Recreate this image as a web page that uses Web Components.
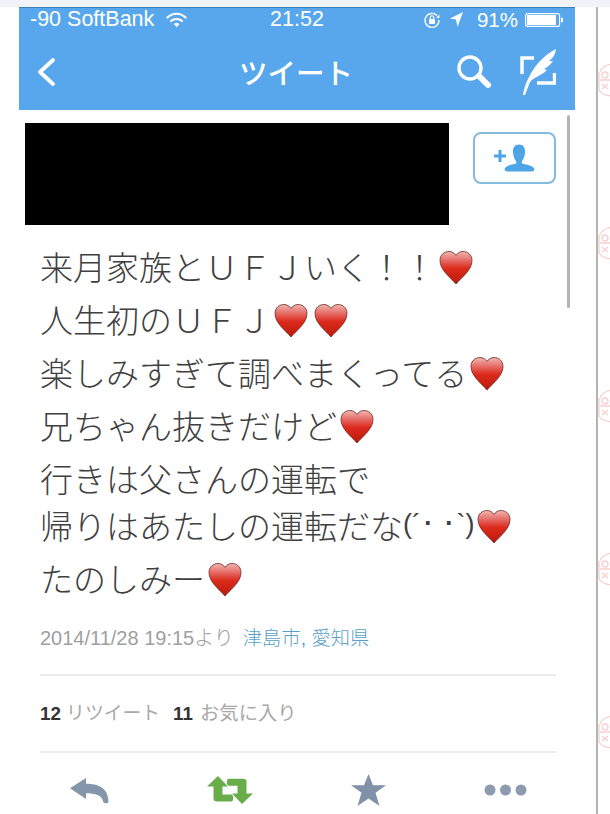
<!DOCTYPE html>
<html lang="ja">
<head>
<meta charset="utf-8">
<title>ツイート</title>
<style>
  html, body { margin: 0; height: 814px; overflow: hidden; background: #fff; }
  body { font-family: "Liberation Sans", "Noto Sans CJK JP", sans-serif; }
</style>
</head>
<body>
<screenshot-page>
  <phone-screen>
    <status-bar></status-bar>
    <nav-bar title-text="ツイート"></nav-bar>
    <tweet-header></tweet-header>
    <tweet-body>
      <tweet-line>来月家族とＵＦＪいく！！<heart-icon></heart-icon></tweet-line>
      <tweet-line>人生初のＵＦＪ<heart-icon></heart-icon><heart-icon></heart-icon></tweet-line>
      <tweet-line>楽しみすぎて調べまくってる<heart-icon></heart-icon></tweet-line>
      <tweet-line>兄ちゃん抜きだけど<heart-icon></heart-icon></tweet-line>
      <tweet-line>行きは父さんの運転で</tweet-line>
      <tweet-line tight>帰りはあたしの運転だな<small-face>(´･&nbsp;･`)</small-face><heart-icon></heart-icon></tweet-line>
      <tweet-line>たのしみー<heart-icon></heart-icon></tweet-line>
    </tweet-body>
    <tweet-meta></tweet-meta>
    <tweet-counts></tweet-counts>
    <action-bar></action-bar>
  </phone-screen>
</screenshot-page>

<script>
class ScreenshotPage extends HTMLElement {
  constructor() {
    super();
    this.attachShadow({ mode: 'open' });
    const stamps = Array(5).fill('<page-stamp></page-stamp>').join('');
    this.shadowRoot.innerHTML = `
      <style>
        :host { display: block; width: 610px; height: 814px; overflow: hidden; }
        .strip { height: 7px; background: #f0f3f8; }
        .row { display: flex; height: 807px; }
        .gutter { width: 19px; flex: none; }
        .mid { width: 21px; flex: none; }
        .margin {
          flex: 1;
          border-left: 2px solid #b4b4b4;
          padding-top: 55px;
          display: flex;
          flex-direction: column;
          gap: 127px;
        }
      </style>
      <div class="strip"></div>
      <div class="row">
        <div class="gutter"></div>
        <slot></slot>
        <div class="mid"></div>
        <div class="margin">${stamps}</div>
      </div>
    `;
  }
}

class PageStamp extends HTMLElement {
  constructor() {
    super();
    this.attachShadow({ mode: 'open' });
    this.shadowRoot.innerHTML = `
      <style>
        :host { display: block; width: 12px; height: 36px; overflow: hidden; }
        svg { filter: blur(0.5px); }
      </style>
      <svg width="24" height="36" viewBox="0 0 24 36" fill="none" stroke="#f6d0d0" stroke-width="1.3">
        <path d="M2 10 C4 4 12 1 20 3 M1 10 V28 C4 33 12 35 20 33"/>
        <circle cx="7" cy="13" r="3"/>
        <path d="M2 18 L12 18 M4 22 L10 27 M10 22 L4 27"/>
      </svg>
    `;
  }
}

class PhoneScreen extends HTMLElement {
  constructor() {
    super();
    this.attachShadow({ mode: 'open' });
    this.shadowRoot.innerHTML = `
      <style>
        :host { display: block; position: relative; width: 556px; flex: none; height: 807px; overflow: hidden; background: #fff; }
        .scroll {
          position: absolute;
          left: 548px;
          top: 108px;
          width: 3px;
          height: 193px;
          border-radius: 2px;
          background: #b3b3b3;
        }
      </style>
      <slot></slot>
      <div class="scroll"></div>
    `;
  }
}

class StatusBar extends HTMLElement {
  constructor() {
    super();
    this.attachShadow({ mode: 'open' });
    this.shadowRoot.innerHTML = `
      <style>
        :host {
          display: grid;
          grid-template-columns: 1fr auto 1fr;
          align-items: center;
          height: 23px;
          padding: 0 11px;
          background: #58a7ec;
          box-shadow: inset 0 1px 0 #3d7fb5;
          color: #fff;
          font: 21.5px "Liberation Sans", sans-serif;
        }
        .left, .right { display: flex; align-items: center; }
        .right { justify-content: flex-end; }
        svg { display: block; }
        .wifi { margin-left: 12px; }
        .pct { margin: 0 7px 0 14px; font-size: 20.5px; }
        .arrow { margin-left: 10px; }
      </style>
      <div class="left">
        <span>-90 SoftBank</span>
        <svg class="wifi" width="21" height="16" viewBox="0 0 21 16" fill="none" stroke="#fff" stroke-width="2.2" stroke-linecap="round">
          <path d="M1.5 5.5 C7 0.5 14 0.5 19.5 5.5"/>
          <path d="M5 9 C8 6.3 13 6.3 16 9"/>
          <path d="M10.5 14.5 L8.3 12 C9.6 11 11.4 11 12.7 12 Z" fill="#fff" stroke-width="1"/>
        </svg>
      </div>
      <span>21:52</span>
      <div class="right">
        <svg width="16" height="16" viewBox="0 0 16 16" fill="none" stroke="#fff" stroke-width="1.4">
          <path d="M13 3.5 A7 7 0 1 0 15 8"/>
          <path d="M15.4 2.5 V6 H12" fill="#fff" stroke="none"/>
          <rect x="5" y="7" width="6" height="5" rx="1" fill="#fff" stroke="none"/>
          <path d="M6.3 7 V5.5 A1.7 1.7 0 0 1 9.7 5.5 V7" stroke-width="1.1"/>
        </svg>
        <svg class="arrow" width="13" height="15" viewBox="0 0 13 15" fill="#fff"><path d="M13 0 L0 6.5 L6 7.5 L7.5 15 Z"/></svg>
        <span class="pct">91%</span>
        <svg width="39" height="14" viewBox="0 0 39 14">
          <rect x="0.6" y="0.6" width="34" height="12.8" rx="2" fill="none" stroke="#fff" stroke-width="1.1"/>
          <rect x="2" y="2" width="29" height="10" fill="#fff"/>
          <rect x="36" y="4.5" width="2" height="5" rx="1" fill="#fff"/>
        </svg>
      </div>
    `;
  }
}

class NavBar extends HTMLElement {
  constructor() {
    super();
    this.attachShadow({ mode: 'open' });
    this.shadowRoot.innerHTML = `
      <style>
        :host {
          display: grid;
          grid-template-columns: 1fr auto 1fr;
          align-items: center;
          height: 80px;
          padding: 3px 19px 0 17px;
          box-sizing: border-box;
          background: #58a7ec;
          color: #fff;
        }
        h1 {
          margin: 0;
          font: 500 28.5px "Noto Sans CJK JP", sans-serif;
        }
        .right { display: flex; justify-content: flex-end; align-items: center; gap: 28px; }
        svg { display: block; }
      </style>
      <svg width="20" height="30" viewBox="0 0 20 30" fill="none" stroke="#fff" stroke-width="3.8" stroke-linecap="round" stroke-linejoin="round">
        <path d="M17 3 L4 15 L17 27"/>
      </svg>
      <h1></h1>
      <div class="right">
        <svg width="36" height="34" viewBox="0 0 36 34" fill="none" stroke="#fff">
          <circle cx="14" cy="13" r="11" stroke-width="3.4"/>
          <path d="M23 21 L32 30" stroke-width="6" stroke-linecap="round"/>
        </svg>
        <svg width="36" height="46" viewBox="0 0 36 46" fill="none" stroke="#fff" stroke-width="3.4">
          <path d="M14 9 H2 V25"/>
          <path d="M34.5 24 V34 H17"/>
          <path d="M3 46 C5 32 16 10 36 0 C35 6 33 9 29 12 L33 12 C30 16 28 18 24 20 L27 21 C21 27 14 28 10 33 L5 46 Z" fill="#fff" stroke="none"/>
        </svg>
      </div>
    `;
    this.shadowRoot.querySelector('h1').textContent = this.getAttribute('title-text');
  }
}

class TweetHeader extends HTMLElement {
  constructor() {
    super();
    this.attachShadow({ mode: 'open' });
    this.shadowRoot.innerHTML = `
      <style>
        :host { display: flex; justify-content: space-between; align-items: flex-start; padding: 13px 19px 0 6px; height: 102px; }
        .mask { width: 424px; height: 102px; background: #000; }
        button {
          display: flex;
          align-items: center;
          justify-content: center;
          width: 83px;
          height: 52px;
          margin-top: 9px;
          padding: 0;
          box-sizing: border-box;
          border: 2px solid #86bbdd;
          border-radius: 8px;
          background: #fdfeff;
        }
        svg { display: block; }
      </style>
      <div class="mask"></div>
      <button aria-label="follow">
        <svg width="42" height="28" viewBox="0 0 42 28" fill="#4ea5e6">
          <path d="M0 10.5 H4.5 V6 H7.5 V10.5 H12 V13.5 H7.5 V18 H4.5 V13.5 H0 Z"/>
          <path d="M25 0.5 C29.5 0.5 31.5 4 31 9 C30.6 13 29 16 27.8 17.5 V19.5 C31 20.5 36 20.5 40 24 C41 25.5 40 27.5 38 27.5 H13 C11 27.5 10 25.5 11 24 C14 20.5 19 20.5 22.2 19.5 V17.5 C21 16 19.4 13 19 9 C18.5 4 20.5 0.5 25 0.5 Z"/>
        </svg>
      </button>
    `;
  }
}

class TweetBody extends HTMLElement {
  constructor() {
    super();
    this.attachShadow({ mode: 'open' });
    this.shadowRoot.innerHTML = `
      <style>
        :host { display: block; padding: 14px 0 0 21px; color: #404040; font: 300 33px "Noto Sans CJK JP", sans-serif; }
      </style>
      <slot></slot>
    `;
  }
}

class TweetLine extends HTMLElement {
  constructor() {
    super();
    this.attachShadow({ mode: 'open' });
    this.shadowRoot.innerHTML = `
      <style>
        :host { display: flex; align-items: center; height: 53px; white-space: nowrap; }
        :host([tight]) { height: 41px; margin-bottom: 6px; }
      </style>
      <slot></slot>
    `;
  }
}

class SmallFace extends HTMLElement {
  constructor() {
    super();
    this.attachShadow({ mode: 'open' });
    this.shadowRoot.innerHTML = `
      <style>:host { display: inline-block; font: 27px "Liberation Sans", sans-serif; }</style>
      <slot></slot>
    `;
  }
}

class HeartIcon extends HTMLElement {
  static count = 0;
  constructor() {
    super();
    this.attachShadow({ mode: 'open' });
    const id = 'h' + HeartIcon.count++;
    this.shadowRoot.innerHTML = `
      <style>:host { display: inline-block; width: 34px; height: 36px; flex: none; margin: 0 3px; }</style>
      <svg width="34" height="36" viewBox="0 0 34 36">
        <defs>
          <linearGradient id="${id}" x1="0" y1="0" x2="0" y2="1">
            <stop offset="0" stop-color="#f0b7b2"/>
            <stop offset="0.3" stop-color="#e4645e"/>
            <stop offset="0.52" stop-color="#dc2a1c"/>
            <stop offset="1" stop-color="#bb1a0c"/>
          </linearGradient>
        </defs>
        <path d="M17 34 C11 27 1 20 1 10.5 C1 4.5 5.5 1.5 10 1.5 C13 1.5 15.5 3 17 5.5 C18.5 3 21 1.5 24 1.5 C28.5 1.5 33 4.5 33 10.5 C33 20 23 27 17 34 Z" fill="url(#${id})" stroke="#6f2a26" stroke-width="0.8"/>
      </svg>
    `;
  }
}

class TweetMeta extends HTMLElement {
  constructor() {
    super();
    this.attachShadow({ mode: 'open' });
    this.shadowRoot.innerHTML = `
      <style>
        :host {
          display: block;
          margin: 22px 19px 0 21px;
          padding-bottom: 23px;
          border-bottom: 2px solid #ececec;
          color: #a0a0a0;
          font: 300 20px/24px "Liberation Sans", "Noto Sans CJK JP", sans-serif;
        }
        a { margin-left: 9px; font-size: 19.3px; color: #5a9fc9; text-decoration: none; }
      </style>
      2014/11/28 19:15より<a>津島市, 愛知県</a>
    `;
  }
}

class TweetCounts extends HTMLElement {
  constructor() {
    super();
    this.attachShadow({ mode: 'open' });
    this.shadowRoot.innerHTML = `
      <style>
        :host {
          display: block;
          margin: 0 19px 0 21px;
          padding: 26px 0 25px;
          border-bottom: 2px solid #ececec;
          color: #a8a8a8;
          font: 18.8px/24px "Liberation Sans", "Noto Sans CJK JP", sans-serif;
        }
        b { color: #333; }
        .gap { margin-left: 13px; }
        .fav { margin-left: 2px; font-size: 19.3px; }
      </style>
      <b>12</b> リツイート<b class="gap">11</b> <span class="fav">お気に入り</span>
    `;
  }
}

class ActionBar extends HTMLElement {
  constructor() {
    super();
    this.attachShadow({ mode: 'open' });
    this.shadowRoot.innerHTML = `
      <style>
        :host {
          display: flex;
          justify-content: space-between;
          align-items: center;
          height: 74px;
          padding: 0 48px 0 51px;
        }
        svg { display: block; }
      </style>
      <svg width="39" height="27" viewBox="0 0 39 30" preserveAspectRatio="none" fill="#8596ab">
        <path d="M0 12.5 L16 1 V7.5 C28 7.5 38 12 38.5 27 C38.5 30 33.5 30 33 27 C32 20 25 18 16 18 V24.5 Z"/>
      </svg>
      <svg width="46" height="28" viewBox="0 0 46 32" preserveAspectRatio="none" fill="#68ad4a">
        <path d="M11 0 L21 12 H15.5 V21 H24 C27 21 27 29 24 29 H10 C8 29 6.5 28 6.5 26 V12 H0 Z"/>
        <path d="M35 32 L25 20 H30.5 V11 H22 C19 11 19 3 22 3 H36 C38 3 39.5 4 39.5 6 V20 H46 Z"/>
      </svg>
      <svg width="35" height="32" viewBox="0 0 35 34" preserveAspectRatio="none" fill="#8191a7">
        <path d="M17.5 0 L22 12 H35 L24.5 20 L28.5 34 L17.5 26 L6.5 34 L10.5 20 L0 12 H13 Z"/>
      </svg>
      <svg width="43" height="12" viewBox="0 0 43 12" fill="#8c9bb0">
        <circle cx="6" cy="6" r="5.5"/><circle cx="21.5" cy="6" r="5.5"/><circle cx="37" cy="6" r="5.5"/>
      </svg>
    `;
  }
}

customElements.define('screenshot-page', ScreenshotPage);
customElements.define('page-stamp', PageStamp);
customElements.define('phone-screen', PhoneScreen);
customElements.define('status-bar', StatusBar);
customElements.define('nav-bar', NavBar);
customElements.define('tweet-header', TweetHeader);
customElements.define('tweet-body', TweetBody);
customElements.define('tweet-line', TweetLine);
customElements.define('small-face', SmallFace);
customElements.define('heart-icon', HeartIcon);
customElements.define('tweet-meta', TweetMeta);
customElements.define('tweet-counts', TweetCounts);
customElements.define('action-bar', ActionBar);
</script>
</body>
</html>
